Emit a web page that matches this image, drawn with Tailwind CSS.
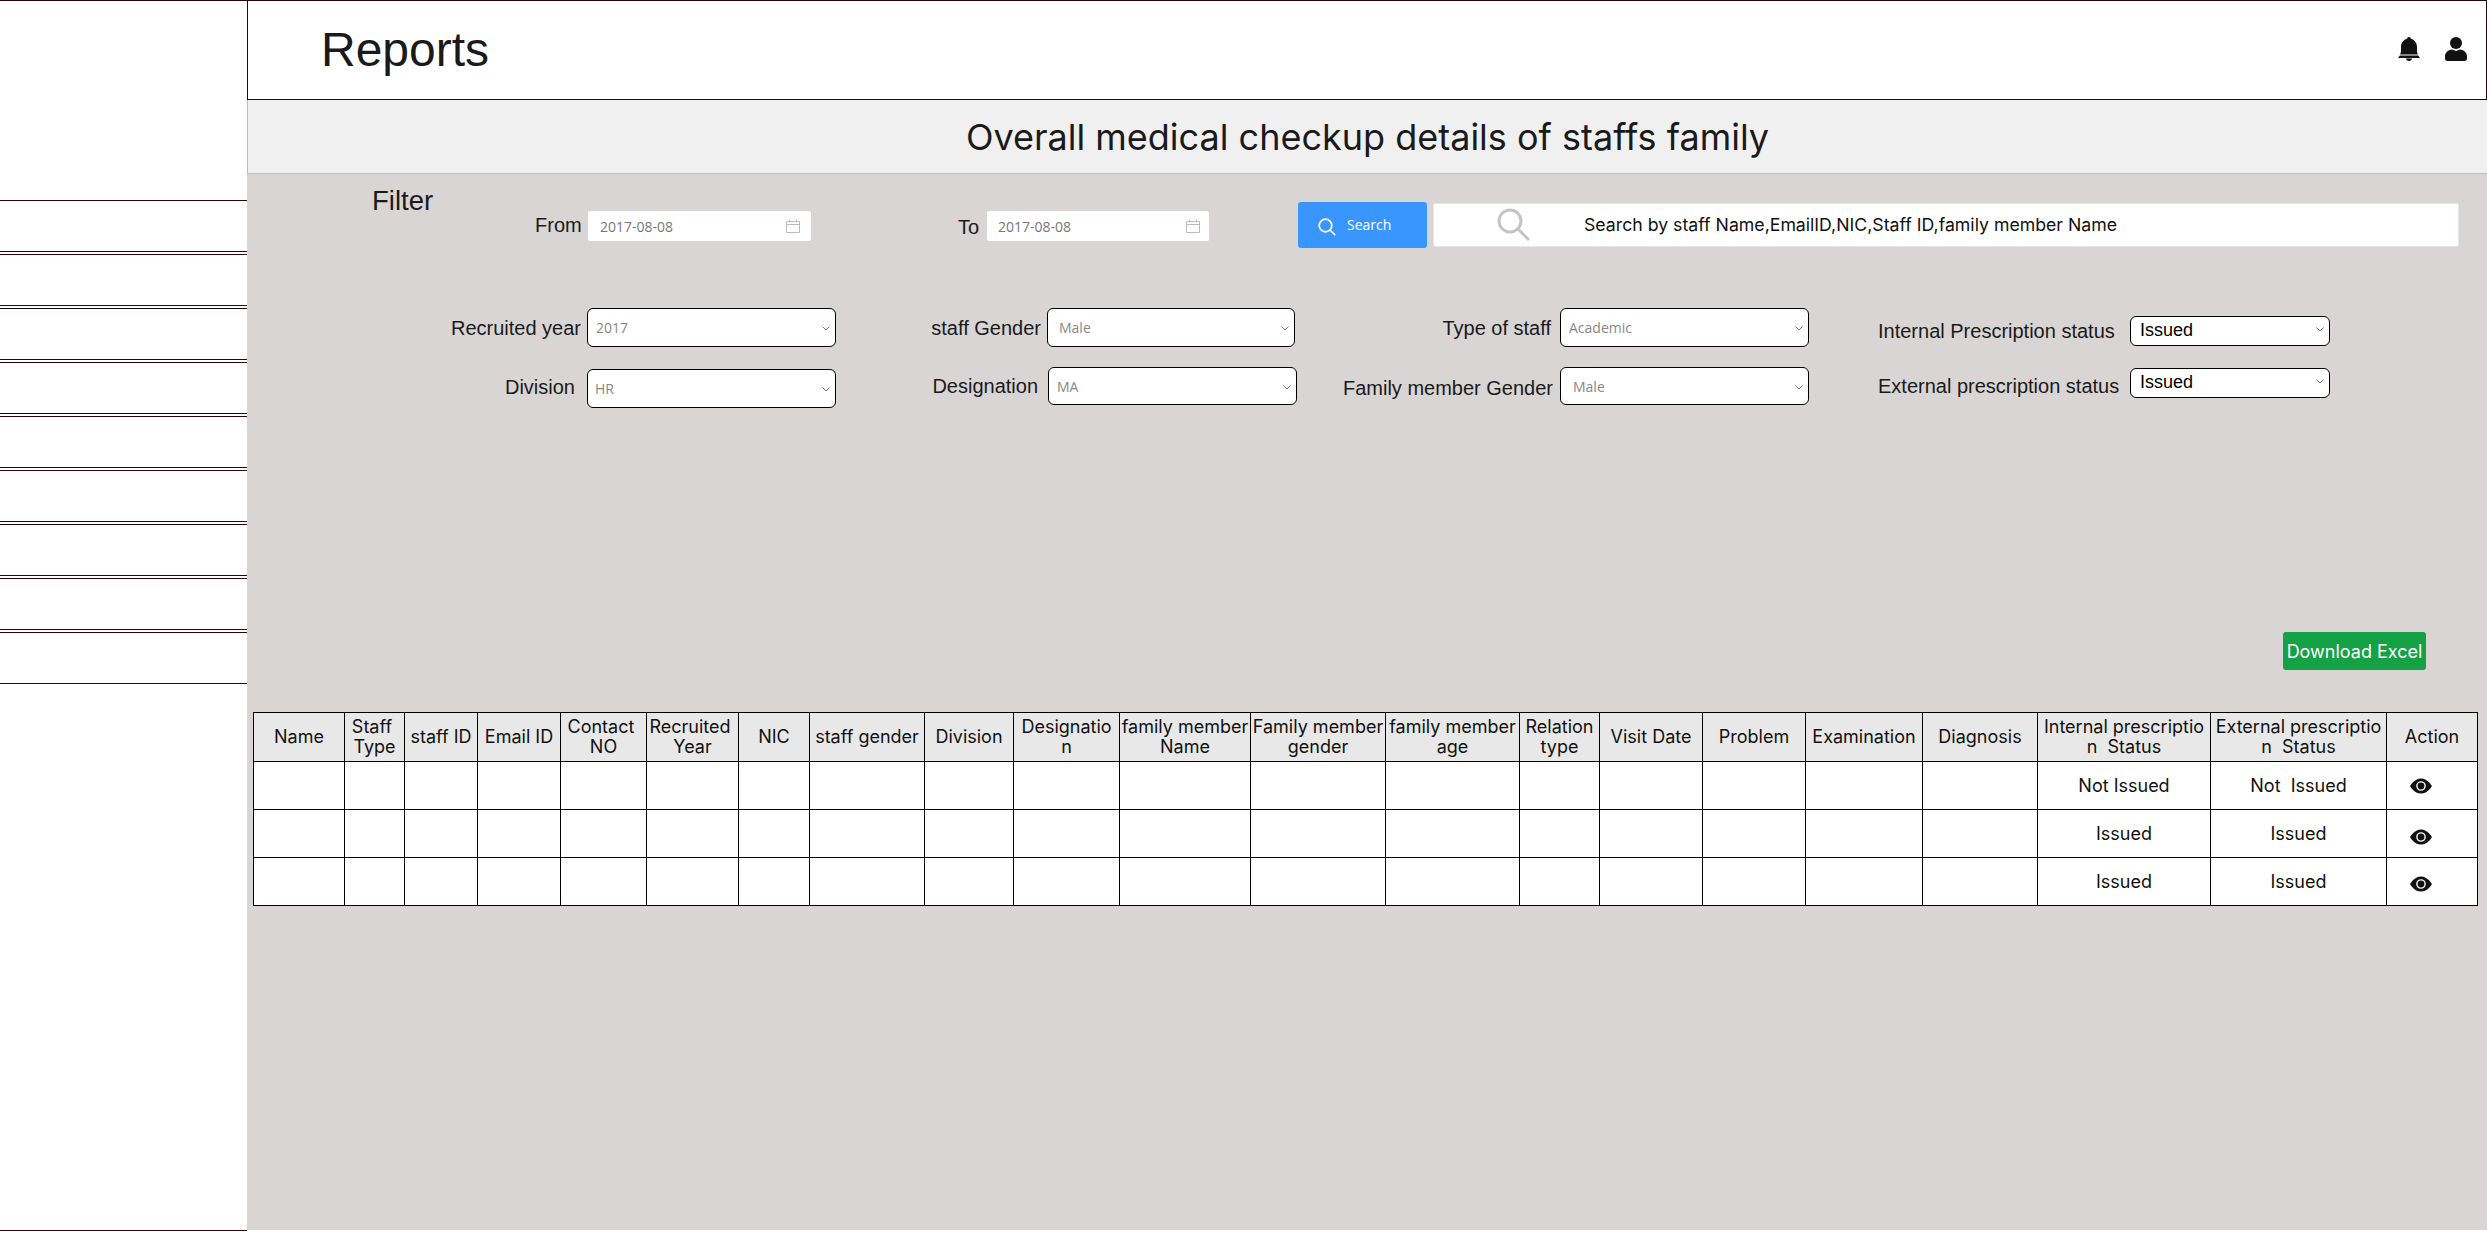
<!DOCTYPE html>
<html lang="en">
<head>
    <meta charset="UTF-8">
    <title>Reports</title>
    <script src="https://cdn.jsdelivr.net/npm/@tailwindcss/browser@4"></script>
</head>
<body class="bg-white text-[#1a1a1a] font-['Liberation_Sans',sans-serif] overflow-hidden">
<div class="flex w-[2487px] h-[1235px] items-start">

    <!-- Sidebar -->
    <aside class="w-[247px] h-[1231px] shrink-0 border-y border-[#2b0505] pt-[199px]">
        <div class="h-[52px] mb-[2px] border-y border-[#2b0505]"></div>
        <div class="h-[52px] mb-[2px] border-y border-[#2b0505]"></div>
        <div class="h-[52px] mb-[2px] border-y border-[#2b0505]"></div>
        <div class="h-[52px] mb-[2px] border-y border-[#2b0505]"></div>
        <div class="h-[52px] mb-[2px] border-y border-[#2b0505]"></div>
        <div class="h-[52px] mb-[2px] border-y border-[#2b0505]"></div>
        <div class="h-[52px] mb-[2px] border-y border-[#2b0505]"></div>
        <div class="h-[52px] mb-[2px] border-y border-[#2b0505]"></div>
        <div class="h-[52px] mb-[2px] border-y border-[#2b0505]"></div>
    </aside>

    <main class="w-[2240px] shrink-0">
        <!-- Top bar -->
        <header class="h-[100px] border border-[#2b0505] flex items-center pl-[73px] pr-[19px]">
            <h1 class="text-[48px] leading-none -mt-[1px]">Reports</h1>
            <svg class="ml-auto w-[22px] h-[24px] -mt-[2px]" viewBox="0 0 22 24" fill="#111">
                <path d="M11 0a2 2 0 0 1 2 1.800c3.400 1 6 4 6 8.200v3.500c0 1.600.4 3 1 3.900H2c.6-.9 1-2.300 1-3.900V10c0-4.200 2.600-7.200 6-8.200A2 2 0 0 1 11 0z"/>
                <path d="M1.800 18.400h18.400L22 21H0z"/>
                <path d="M8 21.600h6c0 1.400-1.300 2.400-3 2.400s-3-1-3-2.400z"/>
            </svg>
            <svg class="ml-[25px] w-[22px] h-[24px] -mt-[2px]" viewBox="0 0 22 24" fill="#111">
                <circle cx="11" cy="6" r="6"/>
                <path d="M0 21.500v-2c0-4 3-6.600 7-7l4 1.500 4-1.500c4 .4 7 3 7 7v2c0 1.500-1 2.500-2.500 2.500h-17C1 24 0 23 0 21.500z"/>
            </svg>
        </header>

        <div class="h-[74px] bg-[#f0f0f0] border-b border-l border-[#bdbdbd] flex items-center justify-center">
            <h2 class="font-['Inter',sans-serif] text-[36px] leading-none mt-[1px]">Overall medical checkup details of staffs family</h2>
        </div>

        <section class="h-[1056px] bg-[#d9d5d5] pt-[28px] flex flex-col">
            <!-- Filter first row -->
            <div class="flex items-center h-[46px] pl-[125px] text-[20px]">
                <span class="w-[163px] self-start -mt-[17px] text-[27.5px] leading-[32px]">Filter</span>
                <label class="w-[53px]">From</label>
                <div class="w-[223px] h-[30px] mt-[2px] bg-white rounded-[2px] flex items-center justify-between pl-[12px] pr-[11px] font-['Open_Sans',sans-serif] text-[14px] text-[#777]">
                    <span>2017-08-08</span>
                    <svg class="w-[14px] h-[14px]" viewBox="0 0 14 14" fill="none" stroke="#bbb"><path d="M.5 2.500h13v11H.5zM.5 5.500h13M3.500 .5v3M10.500 .5v3"/></svg>
                </div>
                <label class="ml-[147px] w-[29px] mt-[4px]">To</label>
                <div class="w-[222px] h-[30px] mt-[2px] bg-white rounded-[2px] flex items-center justify-between pl-[11px] pr-[9px] font-['Open_Sans',sans-serif] text-[14px] text-[#777]">
                    <span>2017-08-08</span>
                    <svg class="w-[14px] h-[14px]" viewBox="0 0 14 14" fill="none" stroke="#bbb"><path d="M.5 2.500h13v11H.5zM.5 5.500h13M3.500 .5v3M10.500 .5v3"/></svg>
                </div>
                <button class="ml-[89px] w-[129px] h-[46px] bg-[#3a96ff] rounded-[3px] flex items-center pl-[20px] text-white font-['Open_Sans',sans-serif] text-[14px]">
                    <svg class="w-[18px] h-[18px] mt-[3px]" viewBox="0 0 18 18" fill="none" stroke="#fff" stroke-width="1.700"><circle cx="7.500" cy="7.500" r="6.300"/><path d="M12 12l5.200 5.200"/></svg>
                    <span class="ml-[11px] -mt-[2px]">Search</span>
                </button>
                <div class="ml-[6px] w-[1026px] h-[44px] bg-white border border-[#e6e6ea] rounded-[2px] flex items-center pl-[63px] font-['Inter',sans-serif] text-[17.7px] text-[#111]">
                    <svg class="w-[34px] h-[34px]" viewBox="0 0 34 34" fill="none" stroke="#c4c4c6" stroke-width="3"><circle cx="13" cy="13" r="11"/><path d="M21 21l11 11"/></svg>
                    <span class="ml-[53px] mt-[1px]">Search by staff Name,EmailID,NIC,Staff ID,family member Name</span>
                </div>
            </div>

            <!-- Filter second row -->
            <div class="flex items-start mt-[60px] text-[20px]">
                <div class="flex items-center h-[39px]">
                    <label class="w-[334px] text-right">Recruited year</label>
                    <div class="relative ml-[6px] w-[249px]">
                        <select class="appearance-none w-full h-[39px] bg-white border border-black rounded-[6px] pl-[8px] font-['Open_Sans',sans-serif] text-[14px] text-[#888]"><option>2017</option></select>
                        <svg class="absolute right-[6px] top-[18px] w-[8px] h-[5px]" viewBox="0 0 8 5" fill="none" stroke="#777"><path d="M.5 .5L4 4l3.500-3.500"/></svg>
                    </div>
                </div>
                <div class="flex items-center h-[39px]">
                    <label class="w-[205px] text-right">staff Gender</label>
                    <div class="relative ml-[6px] w-[248px]">
                        <select class="appearance-none w-full h-[39px] bg-white border border-black rounded-[6px] pl-[11px] font-['Open_Sans',sans-serif] text-[14px] text-[#888]"><option>Male</option></select>
                        <svg class="absolute right-[6px] top-[18px] w-[8px] h-[5px]" viewBox="0 0 8 5" fill="none" stroke="#777"><path d="M.5 .5L4 4l3.500-3.500"/></svg>
                    </div>
                </div>
                <div class="flex items-center h-[39px]">
                    <label class="w-[256px] text-right">Type of staff</label>
                    <div class="relative ml-[9px] w-[249px]">
                        <select class="appearance-none w-full h-[39px] bg-white border border-black rounded-[6px] pl-[8px] font-['Open_Sans',sans-serif] text-[14px] text-[#888]"><option>Academic</option></select>
                        <svg class="absolute right-[6px] top-[18px] w-[8px] h-[5px]" viewBox="0 0 8 5" fill="none" stroke="#777"><path d="M.5 .5L4 4l3.500-3.500"/></svg>
                    </div>
                </div>
                <div class="flex items-center h-[30px] mt-[7px] ml-[69px]">
                    <label class="w-[252px] mt-[2px]">Internal Prescription status</label>
                    <div class="relative w-[200px]">
                        <select class="appearance-none w-full h-[30px] bg-white border border-black rounded-[6px] pl-[9px] text-[18px] text-black"><option>Issued</option></select>
                        <svg class="absolute right-[6px] top-[13px] w-[8px] h-[5px]" viewBox="0 0 8 5" fill="none" stroke="#777"><path d="M.5 .5L4 4l3.500-3.500"/></svg>
                    </div>
                </div>
            </div>

            <!-- Filter third row -->
            <div class="flex items-start mt-[20px] text-[20px]">
                <div class="flex items-center h-[39px] mt-[2px]">
                    <label class="w-[328px] text-right -mt-[3px]">Division</label>
                    <div class="relative ml-[12px] w-[249px]">
                        <select class="appearance-none w-full h-[39px] bg-white border border-black rounded-[6px] pl-[7px] font-['Open_Sans',sans-serif] text-[14px] text-[#888]"><option>HR</option></select>
                        <svg class="absolute right-[6px] top-[18px] w-[8px] h-[5px]" viewBox="0 0 8 5" fill="none" stroke="#777"><path d="M.5 .5L4 4l3.500-3.500"/></svg>
                    </div>
                </div>
                <div class="flex items-center h-[38px]">
                    <label class="w-[202px] text-right">Designation</label>
                    <div class="relative ml-[10px] w-[249px]">
                        <select class="appearance-none w-full h-[38px] bg-white border border-black rounded-[6px] pl-[8px] font-['Open_Sans',sans-serif] text-[14px] text-[#888]"><option>MA</option></select>
                        <svg class="absolute right-[6px] top-[18px] w-[8px] h-[5px]" viewBox="0 0 8 5" fill="none" stroke="#777"><path d="M.5 .5L4 4l3.500-3.500"/></svg>
                    </div>
                </div>
                <div class="flex items-center h-[38px]">
                    <label class="w-[256px] text-right mt-[4px]">Family member Gender</label>
                    <div class="relative ml-[7px] w-[249px]">
                        <select class="appearance-none w-full h-[38px] bg-white border border-black rounded-[6px] pl-[12px] font-['Open_Sans',sans-serif] text-[14px] text-[#888]"><option>Male</option></select>
                        <svg class="absolute right-[6px] top-[18px] w-[8px] h-[5px]" viewBox="0 0 8 5" fill="none" stroke="#777"><path d="M.5 .5L4 4l3.500-3.500"/></svg>
                    </div>
                </div>
                <div class="flex items-center h-[30px] ml-[69px]">
                    <label class="w-[252px] mt-[8px]">External prescription status</label>
                    <div class="relative w-[200px]">
                        <select class="appearance-none w-full h-[30px] bg-white border border-black rounded-[6px] pl-[9px] text-[18px] text-black"><option>Issued</option></select>
                        <svg class="absolute right-[6px] top-[13px] w-[8px] h-[5px]" viewBox="0 0 8 5" fill="none" stroke="#777"><path d="M.5 .5L4 4l3.500-3.500"/></svg>
                    </div>
                </div>
            </div>

            <div class="flex justify-end mt-[224px] pr-[61px]">
                <button class="w-[143px] h-[38px] bg-[#15a145] rounded-[3px] text-white font-['Inter',sans-serif] text-[18px]">Download Excel</button>
            </div>

            <!-- Results table -->
            <table class="mt-[42px] ml-[6px] w-[2224px] table-fixed border-collapse bg-white font-['Inter',sans-serif] text-[18px] leading-[20px] text-[#111] text-center [&_td]:border [&_td]:border-black [&_td]:h-[48px] [&_th]:border [&_th]:border-black [&_th]:h-[49px] [&_th]:font-normal [&_th]:bg-[#e8e8e8]">
                <colgroup>
                    <col class="w-[91px]"><col class="w-[60px]"><col class="w-[73px]"><col class="w-[83px]"><col class="w-[86px]"><col class="w-[92px]"><col class="w-[71px]"><col class="w-[115px]"><col class="w-[89px]"><col class="w-[106px]"><col class="w-[131px]"><col class="w-[135px]"><col class="w-[134px]"><col class="w-[80px]"><col class="w-[103px]"><col class="w-[103px]"><col class="w-[117px]"><col class="w-[115px]"><col class="w-[173px]"><col class="w-[176px]"><col class="w-[91px]">
                </colgroup>
                <thead>
                    <tr>
                        <th>Name</th>
                        <th>Staff&nbsp;<br>Type</th>
                        <th>staff ID</th>
                        <th>Email ID</th>
                        <th>Contact&nbsp;<br>NO</th>
                        <th>Recruited&nbsp;<br>Year</th>
                        <th>NIC</th>
                        <th>staff gender</th>
                        <th>Division</th>
                        <th>Designatio<br>n</th>
                        <th>family member<br>Name</th>
                        <th>Family member<br>gender</th>
                        <th>family member<br>age</th>
                        <th>Relation<br>type</th>
                        <th>Visit Date</th>
                        <th>Problem</th>
                        <th>Examination</th>
                        <th>Diagnosis</th>
                        <th>Internal prescriptio<br>n&nbsp; Status</th>
                        <th>External prescriptio<br>n&nbsp; Status</th>
                        <th>Action</th>
                    </tr>
                </thead>
                <tbody>
                    <tr>
                        <td></td><td></td><td></td><td></td><td></td><td></td><td></td><td></td><td></td><td></td><td></td><td></td><td></td><td></td><td></td><td></td><td></td><td></td>
                        <td>Not Issued</td>
                        <td>Not&nbsp; Issued</td>
                        <td class="pl-[23px]"><svg class="w-[22px] h-[22px] block" viewBox="0 0 16 16" fill="#111"><path d="M10.500 8a2.500 2.500 0 1 1-5 0 2.500 2.500 0 0 1 5 0z"/><path d="M0 8s3-5.500 8-5.500S16 8 16 8s-3 5.500-8 5.500S0 8 0 8zm8 3.500a3.500 3.500 0 1 0 0-7 3.500 3.500 0 0 0 0 7z"/></svg></td>
                    </tr>
                    <tr>
                        <td></td><td></td><td></td><td></td><td></td><td></td><td></td><td></td><td></td><td></td><td></td><td></td><td></td><td></td><td></td><td></td><td></td><td></td>
                        <td>Issued</td>
                        <td>Issued</td>
                        <td class="pl-[23px]"><svg class="w-[22px] h-[22px] block mt-[6px]" viewBox="0 0 16 16" fill="#111"><path d="M10.500 8a2.500 2.500 0 1 1-5 0 2.500 2.500 0 0 1 5 0z"/><path d="M0 8s3-5.500 8-5.500S16 8 16 8s-3 5.500-8 5.500S0 8 0 8zm8 3.500a3.500 3.500 0 1 0 0-7 3.500 3.500 0 0 0 0 7z"/></svg></td>
                    </tr>
                    <tr>
                        <td></td><td></td><td></td><td></td><td></td><td></td><td></td><td></td><td></td><td></td><td></td><td></td><td></td><td></td><td></td><td></td><td></td><td></td>
                        <td>Issued</td>
                        <td>Issued</td>
                        <td class="pl-[23px]"><svg class="w-[22px] h-[22px] block mt-[4px]" viewBox="0 0 16 16" fill="#111"><path d="M10.500 8a2.500 2.500 0 1 1-5 0 2.500 2.500 0 0 1 5 0z"/><path d="M0 8s3-5.500 8-5.500S16 8 16 8s-3 5.500-8 5.500S0 8 0 8zm8 3.500a3.500 3.500 0 1 0 0-7 3.500 3.500 0 0 0 0 7z"/></svg></td>
                    </tr>
                </tbody>
            </table>
        </section>
    </main>
</div>
</body>
</html>
